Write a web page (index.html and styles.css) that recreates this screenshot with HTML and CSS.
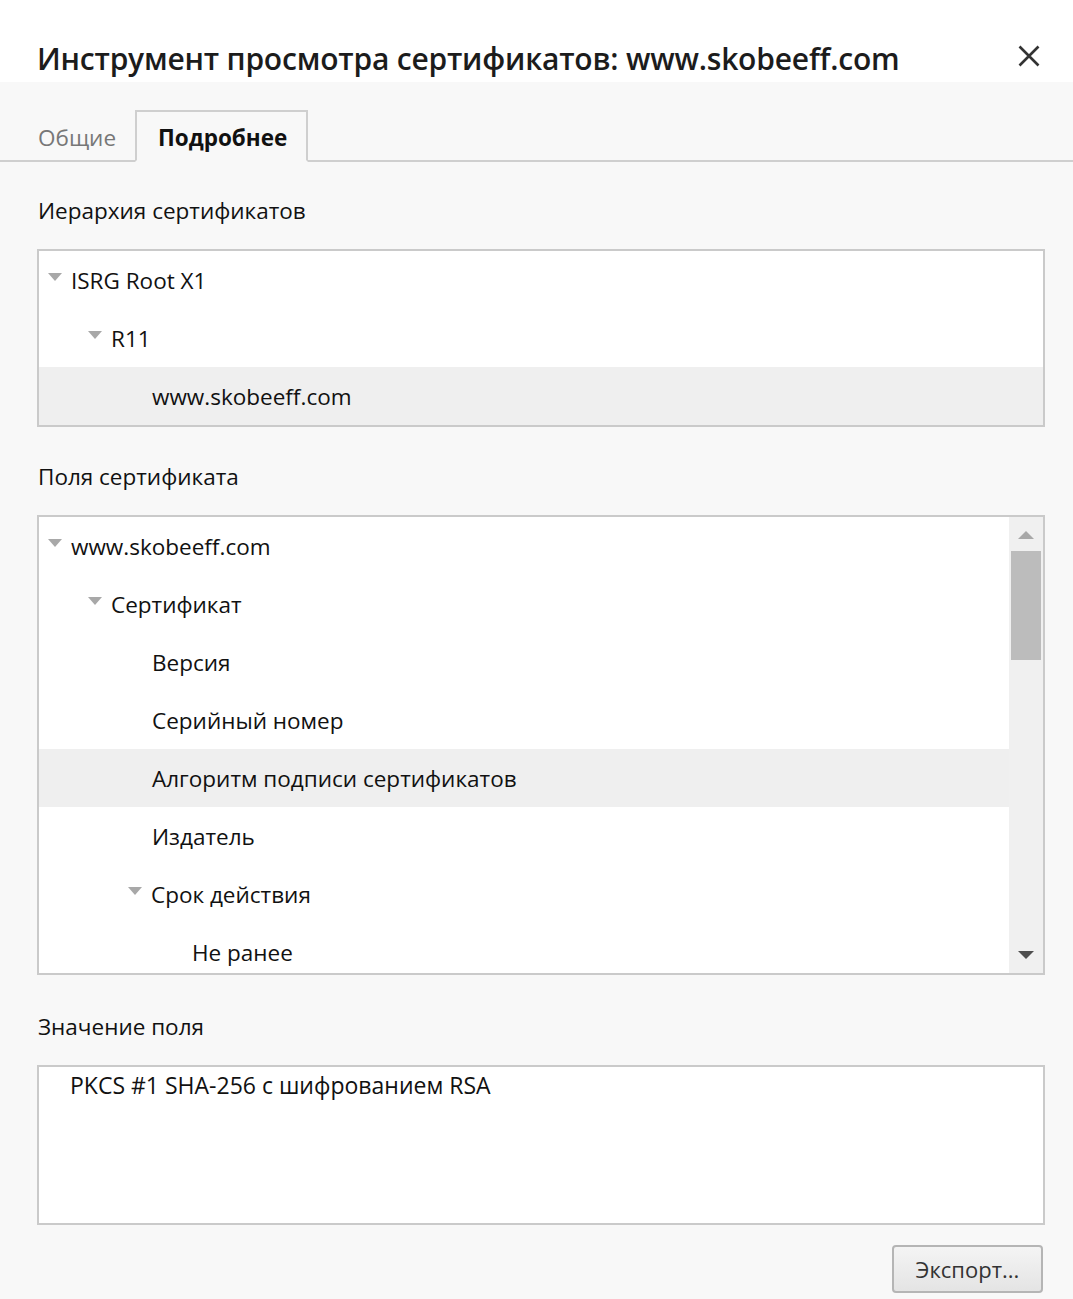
FILE: index.html
```html
<!DOCTYPE html>
<html lang="ru">
<head>
  <meta charset="UTF-8" />
  <title>Инструмент просмотра сертификатов</title>
  <link rel="stylesheet" href="styles.css">
</head>
<body>
  <div class="dialog">
    <header class="titlebar">
      <h1>Инструмент просмотра сертификатов: www.skobeeff.com</h1>
      <button class="close" aria-label="Закрыть">
        <svg width="22" height="22" viewBox="0 0 22 22"><path d="M1.5 1.5 L20.5 20.5 M20.5 1.5 L1.5 20.5" stroke="#333" stroke-width="2.6" fill="none"/></svg>
      </button>
    </header>

    <nav class="tabs">
      <div class="tab">Общие</div>
      <div class="tab active">Подробнее</div>
      <div class="tab-rest"></div>
    </nav>

    <main class="content">
      <div class="label">Иерархия сертификатов</div>
      <div class="box tree">
        <div class="row lvl0"><span class="arrow"></span>ISRG Root X1</div>
        <div class="row lvl1"><span class="arrow"></span>R11</div>
        <div class="row lvl2 selected"><span class="leaf"></span>www.skobeeff.com</div>
      </div>

      <div class="label">Поля сертификата</div>
      <div class="box fields">
        <div class="rows">
          <div class="row lvl0"><span class="arrow"></span>www.skobeeff.com</div>
          <div class="row lvl1"><span class="arrow"></span>Сертификат</div>
          <div class="row lvl2"><span class="leaf"></span>Версия</div>
          <div class="row lvl2"><span class="leaf"></span>Серийный номер</div>
          <div class="row lvl2 selected"><span class="leaf"></span>Алгоритм подписи сертификатов</div>
          <div class="row lvl2"><span class="leaf"></span>Издатель</div>
          <div class="row lvl2"><span class="arrow"></span>Срок действия</div>
          <div class="row lvl3"><span class="leaf"></span>Не ранее</div>
        </div>
        <div class="scrollbar">
          <div class="scroll-btn up"></div>
          <div class="thumb-track"><div class="thumb"></div></div>
          <div class="scroll-btn down"></div>
        </div>
      </div>

      <div class="label">Значение поля</div>
      <div class="box value">PKCS #1 SHA-256 с шифрованием RSA</div>

      <div class="actions">
        <button class="btn">Экспорт...</button>
      </div>
    </main>
  </div>
</body>
</html>
```

FILE: styles.css
```css
body {
  margin: 0;
  background: #f8f8f8;
  font-family: 'Open Sans', 'Noto Sans', sans-serif;
  color: #111;
}
.dialog {
  width: 1073px;
  min-height: 1299px;
}
.titlebar {
  background: #fff;
  height: 82px;
  display: flex;
  align-items: flex-start;
  justify-content: space-between;
  padding: 0 33px 0 37px;
  box-sizing: border-box;
}
.titlebar h1 {
  margin: 39px 0 0;
  font-size: 30px;
  font-weight: 600;
  color: #1c1c1c;
  line-height: 40px;
  letter-spacing: -0.2px;
}
.close {
  margin-top: 45px;
  border: 0;
  background: none;
  padding: 0;
  width: 22px;
  height: 22px;
  cursor: pointer;
}
.tabs {
  display: flex;
  align-items: flex-end;
  height: 80px;
}
.tab {
  font-size: 22.5px;
  color: #777;
  height: 48px;
  line-height: 52px;
  padding: 0 19px 0 38px;
  border-bottom: 2px solid #cfcfcf;
}
.tab.active {
  font-weight: 700;
  font-size: 22.5px;
  color: #111;
  padding: 0 19px 0 21px;
  border: 2px solid #cfcfcf;
  border-bottom: 2px solid transparent;
  background: #f8f8f8;
}
.tab-rest {
  flex: 1;
  border-bottom: 2px solid #cfcfcf;
}
.content {
  padding: 0 28px 0 37px;
}
.label {
  font-size: 22.5px;
  height: 30px;
  line-height: 30px;
  margin: 34px 0 23px 1px;
}
.box {
  background: #fff;
  border: 2px solid #cacaca;
}
.row {
  height: 58px;
  display: flex;
  align-items: center;
  font-size: 22.5px;
  padding-left: 9px;
}
.row.selected {
  background: #efefef;
}
.lvl1 { padding-left: 49px; }
.lvl2 { padding-left: 89px; }
.lvl3 { padding-left: 129px; }
.arrow, .leaf {
  width: 15px;
  margin-right: 9px;
  flex: none;
}
.arrow {
  height: 0;
  width: 0;
  border-left: 7.5px solid transparent;
  border-right: 7.5px solid transparent;
  border-top: 8px solid #a8a8a8;
  margin-top: -6px;
}
.tree + .label {
  margin-top: 35px;
}
.fields + .label {
  margin-top: 37px;
}
.fields {
  display: flex;
  height: 456px;
  overflow: hidden;
}
.rows {
  flex: 1;
  overflow: hidden;
}
.scrollbar {
  width: 34px;
  background: #f0f0f0;
  display: flex;
  flex-direction: column;
  align-items: center;
}
.scroll-btn {
  height: 34px;
  width: 100%;
  position: relative;
}
.scroll-btn::after {
  content: '';
  position: absolute;
  left: 9px;
  border-left: 8px solid transparent;
  border-right: 8px solid transparent;
}
.scroll-btn.up::after {
  top: 14px;
  border-bottom: 8px solid #a8a8a8;
}
.scroll-btn.down::after {
  bottom: 14px;
  border-top: 8px solid #4f4f4f;
}
.thumb-track {
  flex: 1;
  width: 100%;
}
.thumb {
  width: 30px;
  height: 109px;
  margin: 0 auto;
  background: #bcbcbc;
}
.value.box {
  height: 154px;
  font-size: 23px;
  padding: 2px 0 0 31px;
  line-height: 32px;
}
.actions {
  display: flex;
  justify-content: flex-end;
  margin: 20px 2px 0 0;
}
.btn {
  width: 151px;
  height: 48px;
  font-family: 'Open Sans', 'Noto Sans', sans-serif;
  font-size: 22px;
  color: #333;
  border: 2px solid #b5b5b5;
  border-radius: 4px;
  background: linear-gradient(#f4f4f4, #e4e4e4);
  padding: 0;
}
```
